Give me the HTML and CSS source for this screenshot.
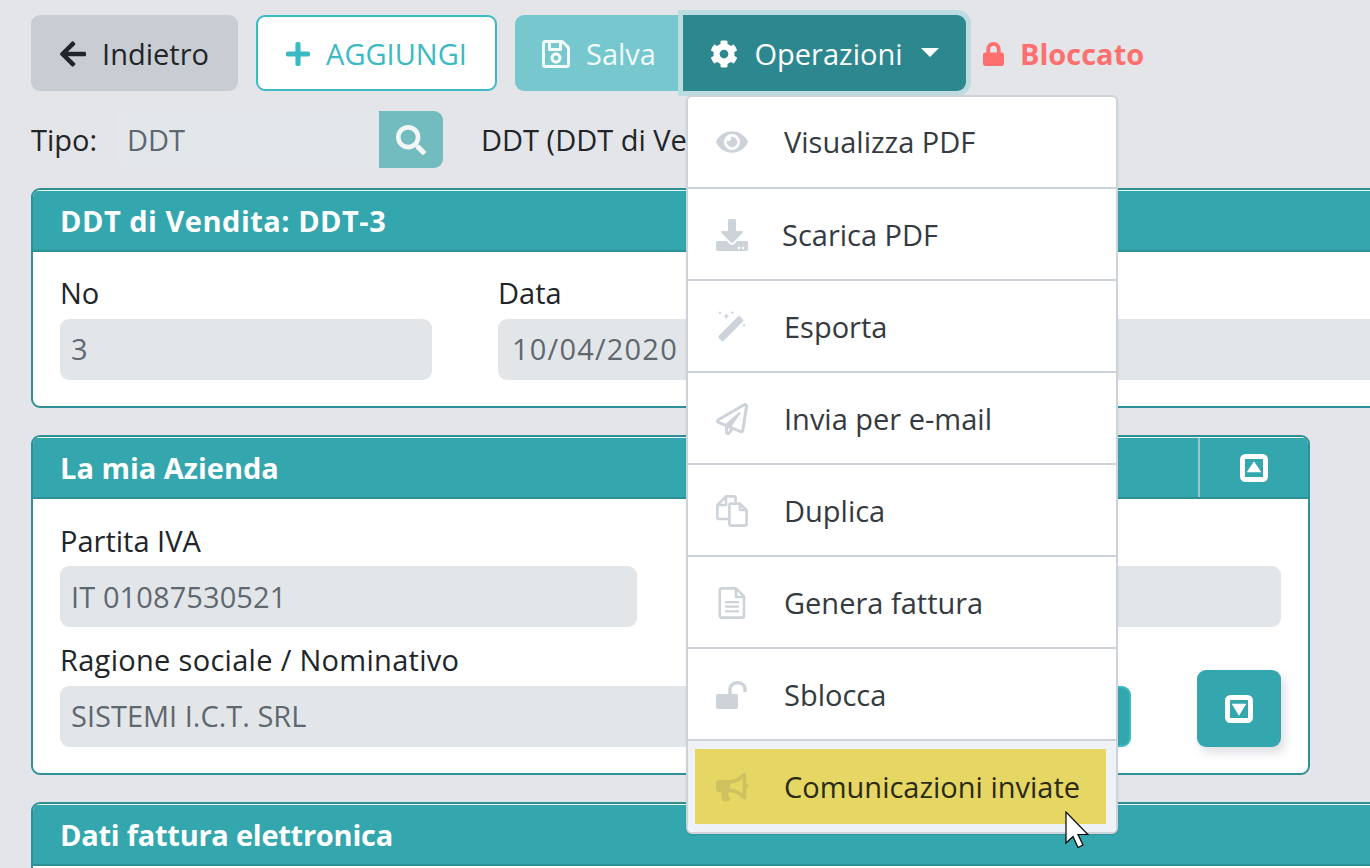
FILE: index.html
```html
<!DOCTYPE html>
<html lang="it">
<head>
<meta charset="utf-8">
<title>DDT di Vendita</title>
<link rel="stylesheet" href="styles.css">
</head>
<body>
<svg class="sprite" xmlns="http://www.w3.org/2000/svg">
<symbol id="i-back" viewBox="0 0 448 512"><path d="M257.5 445.1l-22.2 22.2c-9.4 9.4-24.6 9.4-33.9 0L7 273c-9.4-9.4-9.4-24.6 0-33.9L201.4 44.7c9.4-9.4 24.6-9.4 33.9 0l22.2 22.2c9.5 9.5 9.3 25-.4 34.3L136.6 216H424c13.3 0 24 10.7 24 24v32c0 13.3-10.7 24-24 24H136.6l120.5 114.8c9.8 9.3 10 24.8.4 34.3z"/></symbol>
<symbol id="i-plus" viewBox="0 0 448 512"><path d="M416 208H272V64c0-17.67-14.33-32-32-32h-32c-17.67 0-32 14.33-32 32v144H32c-17.67 0-32 14.33-32 32v32c0 17.67 14.33 32 32 32h144v144c0 17.67 14.33 32 32 32h32c17.67 0 32-14.33 32-32V304h144c17.67 0 32-14.33 32-32v-32c0-17.67-14.33-32-32-32z"/></symbol>
<symbol id="i-save" viewBox="0 0 448 512"><path d="M433.941 129.941l-83.882-83.882A48 48 0 0 0 316.118 32H48C21.49 32 0 53.49 0 80v352c0 26.51 21.49 48 48 48h352c26.51 0 48-21.49 48-48V163.882a48 48 0 0 0-14.059-33.941zM272 80v80H144V80h128zm122 352H54a6 6 0 0 1-6-6V86a6 6 0 0 1 6-6h42v104c0 13.255 10.745 24 24 24h176c13.255 0 24-10.745 24-24V83.882l78.243 78.243a6 6 0 0 1 1.757 4.243V426a6 6 0 0 1-6 6zM224 232c-48.523 0-88 39.477-88 88s39.477 88 88 88 88-39.477 88-88-39.477-88-88-88zm0 128c-22.056 0-40-17.944-40-40s17.944-40 40-40 40 17.944 40 40-17.944 40-40 40z"/></symbol>
<symbol id="i-cog" viewBox="0 0 512 512"><path d="M487.4 315.7l-42.6-24.6c4.3-23.2 4.3-47 0-70.2l42.6-24.6c4.9-2.8 7.1-8.6 5.5-14-11.1-35.6-30-67.8-54.7-94.6-3.8-4.1-10-5.1-14.8-2.3L380.8 110c-17.9-15.4-38.5-27.3-60.8-35.1V25.8c0-5.6-3.9-10.5-9.4-11.7-36.7-8.2-74.3-7.8-109.2 0-5.5 1.2-9.4 6.1-9.4 11.7V75c-22.2 7.9-42.8 19.8-60.8 35.1L88.7 85.5c-4.9-2.8-11-1.9-14.8 2.3-24.7 26.7-43.6 58.9-54.7 94.6-1.7 5.4.6 11.2 5.5 14L67.3 221c-4.3 23.2-4.3 47 0 70.2l-42.6 24.6c-4.9 2.8-7.1 8.6-5.5 14 11.1 35.6 30 67.8 54.7 94.6 3.8 4.1 10 5.1 14.8 2.3l42.6-24.6c17.9 15.4 38.5 27.3 60.8 35.1v49.2c0 5.6 3.9 10.5 9.4 11.7 36.7 8.2 74.3 7.8 109.2 0 5.5-1.2 9.4-6.1 9.4-11.7v-49.2c22.2-7.9 42.8-19.8 60.8-35.1l42.6 24.6c4.9 2.8 11 1.9 14.8-2.3 24.7-26.7 43.6-58.9 54.7-94.6 1.5-5.5-.7-11.3-5.6-14.1zM256 336c-44.1 0-80-35.9-80-80s35.9-80 80-80 80 35.9 80 80-35.9 80-80 80z"/></symbol>
<symbol id="i-lock" viewBox="0 0 448 512"><path d="M400 224h-24v-72C376 68.2 307.8 0 224 0S72 68.2 72 152v72H48c-26.5 0-48 21.5-48 48v192c0 26.5 21.5 48 48 48h352c26.5 0 48-21.5 48-48V272c0-26.5-21.5-48-48-48zm-104 0H152v-72c0-39.7 32.3-72 72-72s72 32.3 72 72v72z"/></symbol>
<symbol id="i-search" viewBox="0 0 512 512"><path d="M505 442.7L405.3 343c-4.5-4.5-10.6-7-17-7H372c27.6-35.3 44-79.7 44-128C416 93.1 322.9 0 208 0S0 93.1 0 208s93.1 208 208 208c48.3 0 92.7-16.4 128-44v16.3c0 6.4 2.5 12.5 7 17l99.7 99.7c9.4 9.4 24.6 9.4 33.9 0l28.3-28.3c9.4-9.4 9.4-24.6.1-34zM208 336c-70.7 0-128-57.2-128-128 0-70.7 57.2-128 128-128 70.7 0 128 57.2 128 128 0 70.7-57.2 128-128 128z"/></symbol>
<symbol id="i-eye" viewBox="0 0 576 512"><path d="M572.52 241.4C518.29 135.59 410.93 64 288 64S57.68 135.64 3.48 241.41a32.35 32.35 0 0 0 0 29.19C57.71 376.41 165.07 448 288 448s230.32-71.64 284.52-177.41a32.35 32.35 0 0 0 0-29.19zM288 400a144 144 0 1 1 144-144 143.93 143.93 0 0 1-144 144zm0-240a95.31 95.31 0 0 0-25.31 3.79 47.85 47.85 0 0 1-66.9 66.9A95.78 95.78 0 1 0 288 160z"/></symbol>
<symbol id="i-download" viewBox="0 0 512 512"><path d="M216 0h80c13.3 0 24 10.7 24 24v168h87.7c17.8 0 26.7 21.5 14.1 34.1L269.7 378.3c-7.5 7.5-19.8 7.5-27.3 0L90.1 226.1c-12.6-12.6-3.7-34.1 14.1-34.1H192V24c0-13.3 10.7-24 24-24zm296 376v112c0 13.3-10.7 24-24 24H24c-13.3 0-24-10.7-24-24V376c0-13.3 10.7-24 24-24h146.7l49 49c20.1 20.1 52.5 20.1 72.6 0l49-49H488c13.3 0 24 10.7 24 24zm-124 88c0-11-9-20-20-20s-20 9-20 20 9 20 20 20 20-9 20-20zm64 0c0-11-9-20-20-20s-20 9-20 20 9 20 20 20 20-9 20-20z"/></symbol>
<symbol id="i-magic" viewBox="0 0 30 30"><path d="M2.6 23.2 20.6 5.2a1.4 1.4 0 0 1 2 0l2.6 2.6a1.4 1.4 0 0 1 0 2L7.2 27.8a1.4 1.4 0 0 1-2 0L2.6 25.2a1.4 1.4 0 0 1 0-2z"/><path d="M9.7 1.5Q9.9 4.8 13 5 9.9 5.2 9.7 8.5 9.5 5.2 6.4 5 9.5 4.8 9.7 1.5zM3.7-.4Q3.8 1.6 5.8 1.7 3.8 1.8 3.7 3.8 3.6 1.8 1.6 1.7 3.6 1.6 3.7-.4zM15.3-.4Q15.4 1.6 17.4 1.7 15.4 1.8 15.3 3.8 15.2 1.8 13.2 1.7 15.2 1.6 15.3-.4zM26.3 11.2Q26.4 13.2 28.4 13.3 26.4 13.4 26.3 15.4 26.2 13.4 24.2 13.3 26.2 13.2 26.3 11.2z"/></symbol>
<symbol id="i-plane" viewBox="0 0 512 512"><path d="M440 6.5L24 246.4c-34.4 19.9-31.1 70.8 5.7 85.9L144 379.6V464c0 46.4 59.2 65.5 86.6 28.6l43.8-59.1 111.9 46.2c5.9 2.4 12.1 3.6 18.3 3.6 8.2 0 16.3-2.1 23.6-6.2 12.8-7.2 21.6-20 23.9-34.5l59.4-387.2c6.1-40.1-36.9-68.8-71.5-48.9zM192 464v-64.6l36.6 15.1L192 464zm212.6-28.7l-153.8-63.5L391 169.5c10.7-15.5-9.5-33.5-23.7-21.2L155.8 332.6 48 288 464 48l-59.4 387.3z"/></symbol>
<symbol id="i-copy" viewBox="0 0 32 32"><path fill="none" stroke="currentColor" stroke-width="2.6" stroke-linejoin="round" d="M12 24H3a1.6 1.6 0 0 1-1.6-1.6V10L10 1.4h8A1.6 1.6 0 0 1 19.6 3v5M2 10h8V2"/><path fill="none" stroke="currentColor" stroke-width="2.6" stroke-linejoin="round" d="M14.6 8.6H24l6.6 6.6V29a1.6 1.6 0 0 1-1.6 1.6H15a1.6 1.6 0 0 1-1.6-1.6V10a1.4 1.4 0 0 1 1.2-1.4zM24 9v6h6"/></symbol>
<symbol id="i-file" viewBox="0 0 28 32"><path fill="none" stroke="currentColor" stroke-width="2.6" stroke-linejoin="round" d="M3.4 1.4H18L26 9.4V29a1.6 1.6 0 0 1-1.6 1.6H3.4A1.6 1.6 0 0 1 1.8 29V3a1.6 1.6 0 0 1 1.6-1.6zM18 2v8h8"/><path d="M7 14h14v2.2H7zM7 18.6h14v2.2H7zM7 23.2h14v2.2H7z"/></symbol>
<symbol id="i-unlock" viewBox="0 0 32 28"><path d="M2 13h18a2 2 0 0 1 2 2v11a2 2 0 0 1-2 2H2a2 2 0 0 1-2-2V15a2 2 0 0 1 2-2z"/><path fill="none" stroke="currentColor" stroke-width="3.4" d="M14 13V8a7.5 6.3 0 0 1 15 0v3"/></symbol>
<symbol id="i-horn" viewBox="0 0 576 512"><path d="M576 240c0-23.63-12.95-44.04-32-55.12V32.01C544 23.26 537.02 0 512 0c-7.12 0-14.19 2.38-19.98 7.02l-85.03 68.03C364.28 109.19 310.66 128 256 128H64c-35.35 0-64 28.65-64 64v96c0 35.35 28.65 64 64 64h33.7c-1.39 10.48-2.18 21.14-2.18 32 0 39.77 9.26 77.35 25.56 110.94 5.19 10.69 16.52 17.06 28.4 17.06h74.28c26.05 0 41.69-29.84 25.9-50.56-16.4-21.52-26.15-48.36-26.15-77.44 0-11.11 1.62-21.79 4.41-32H256c54.66 0 108.28 18.81 150.98 52.95l85.03 68.03a32.023 32.023 0 0 0 19.98 7.02c24.92 0 32-22.78 32-32V295.13C563.05 284.04 576 263.63 576 240zm-96 141.42l-33.05-26.44C392.95 311.78 325.12 288 256 288v-96c69.12 0 136.95-23.78 190.95-66.98L480 98.58v282.84z"/></symbol>
<symbol id="i-sq-up" viewBox="0 0 28 28"><rect x="2.5" y="2.5" width="23" height="23" rx="3" fill="none" stroke="currentColor" stroke-width="5"/><path d="M14 7.3 21.3 18.3H6.7z"/></symbol>
<symbol id="i-sq-down" viewBox="0 0 28 28"><rect x="2.5" y="2.5" width="23" height="23" rx="3" fill="none" stroke="currentColor" stroke-width="5"/><path d="M6.7 8.7H21.3L14 20.7z"/></symbol>
</svg>

<div class="page">
  <div class="toolbar">
    <button class="btn btn-back"><svg class="ico ico-26"><use href="#i-back"/></svg>Indietro</button>
    <button class="btn btn-add"><svg class="ico ico-plus"><use href="#i-plus"/></svg>AGGIUNGI</button>
    <div class="btn-group">
      <button class="btn btn-save"><svg class="ico ico-28"><use href="#i-save"/></svg>Salva</button>
      <button class="btn btn-ops"><svg class="ico ico-28"><use href="#i-cog"/></svg>Operazioni<span class="caret"></span></button>
    </div>
    <div class="locked"><svg class="ico ico-24"><use href="#i-lock"/></svg>Bloccato</div>
  </div>

  <div class="type-row">
    <span class="type-label">Tipo:</span>
    <span class="type-input">DDT</span>
    <span class="type-search"><svg class="ico ico-search"><use href="#i-search"/></svg></span>
    <span class="type-desc">DDT (DDT di Vendita)</span>
  </div>

  <section class="card card-wide">
    <h2 class="card-head"><span class="card-title title-wide">DDT di Vendita: DDT-3</span></h2>
    <div class="card-body fields-doc">
      <div class="field"><label class="field-label">No</label><div class="input">3</div></div>
      <div class="field"><label class="field-label">Data</label><div class="input input-date">10/04/2020</div></div>
      <div class="field"><span class="field-label"></span><div class="input"></div></div>
    </div>
  </section>

  <section class="card card-company">
    <h2 class="card-head"><span class="card-title">La mia Azienda</span><span class="card-toggle"><svg class="ico ico-toggle"><use href="#i-sq-up"/></svg></span></h2>
    <div class="card-body">
      <div class="company-row">
        <div class="field field-vat"><label class="field-label">Partita IVA</label><div class="input">IT 01087530521</div></div>
        <div class="field field-fill"><span class="field-label"></span><div class="input"></div></div>
      </div>
      <div class="company-row company-row-2">
        <div class="field field-name"><label class="field-label label-wide">Ragione sociale / Nominativo</label><div class="input">SISTEMI I.C.T. SRL</div></div>
        <span class="lookup-btn"></span>
        <span class="expand-btn"><svg class="ico ico-toggle"><use href="#i-sq-down"/></svg></span>
      </div>
    </div>
  </section>

  <section class="card card-wide card-last">
    <h2 class="card-head"><span class="card-title title-tight">Dati fattura elettronica</span></h2>
    <div class="card-body"></div>
  </section>

  <ul class="menu">
    <li class="menu-item menu-item-first"><svg class="ico menu-ico"><use href="#i-eye"/></svg>Visualizza PDF</li>
    <li class="menu-item menu-item-dl"><svg class="ico menu-ico"><use href="#i-download"/></svg>Scarica PDF</li>
    <li class="menu-item"><svg class="ico menu-ico"><use href="#i-magic"/></svg>Esporta</li>
    <li class="menu-item"><svg class="ico menu-ico"><use href="#i-plane"/></svg>Invia per e-mail</li>
    <li class="menu-item"><svg class="ico menu-ico"><use href="#i-copy"/></svg>Duplica</li>
    <li class="menu-item"><svg class="ico menu-ico"><use href="#i-file"/></svg>Genera fattura</li>
    <li class="menu-item"><svg class="ico menu-ico"><use href="#i-unlock"/></svg>Sblocca</li>
    <li class="menu-item menu-item-active"><span class="highlight"><svg class="ico menu-ico"><use href="#i-horn"/></svg>Comunicazioni inviate</span></li>
  </ul>

  <svg class="cursor" viewBox="0 0 24 38" width="24" height="38"><path d="M1 1v31l7-6.5 5 11 5-2.5-5-10.5h10z" fill="#fff" stroke="#000" stroke-width="1.2" stroke-linejoin="miter"/></svg>
</div>
</body>
</html>
```

FILE: styles.css
```css
* { box-sizing: border-box; }
html, body { margin: 0; padding: 0; height: 100%; }
body { background: #e3e5e8; overflow: hidden; }
.sprite { display: none; }
.page {
  position: relative;
  width: 1370px;
  height: 868px;
  overflow: hidden;
  padding: 15px 0 0 31px;
  font-family: "Open Sans", "Noto Sans", sans-serif;
  font-stretch: 88%;
  font-size: 29px;
  line-height: 1.5;
  color: #212529;
}
.ico { fill: currentColor; flex: none; display: block; }
.ico-26 { width: 26px; height: 30px; }
.ico-plus { width: 24px; height: 28px; }
.ico-28 { width: 28px; height: 32px; }
.ico-24 { width: 21px; height: 24px; }

.toolbar { display: flex; align-items: stretch; height: 76px; }
.btn {
  display: flex;
  align-items: center;
  justify-content: center;
  font: inherit;
  font-stretch: inherit;
  border: 2px solid transparent;
  padding: 2px 0 0;
  height: 76px;
  gap: 16px;
}
.btn-back { width: 207px; background: #c8cdd4; border-radius: 9px; color: #212529; }
.btn-add { width: 241px; margin-left: 18px; background: #fff; border-color: #3cbac3; border-radius: 9px; color: #3cbac3; }
.btn-group { display: flex; margin-left: 18px; }
.btn-save { width: 168px; background: #76c8ce; border-radius: 9px 0 0 9px; color: #f2fafa; }
.btn-ops {
  width: 283px;
  background: #2c878f;
  border-radius: 0 9px 9px 0;
  color: #fff;
  box-shadow: 0 0 0 5px #bcdcdf;
  position: relative;
}
.caret { width: 0; height: 0; border: 9px solid transparent; border-top-color: #fff; border-bottom: 0; margin-left: 2px; margin-top: -4px; }
.locked { display: flex; align-items: center; gap: 16px; margin-left: 17px; padding-top: 2px; color: #fe6f6f; font-weight: 700; }

.type-row { display: flex; align-items: center; height: 57px; margin-top: 20px; }
.type-label { width: 84px; }
.type-input { width: 264px; height: 57px; display: flex; align-items: center; padding-left: 12px; background: #e4e7ea; border-radius: 9px 0 0 9px; color: #5f6770; }
.type-search { width: 64px; height: 57px; display: flex; align-items: center; justify-content: center; background: #72bcc0; border-radius: 0 9px 9px 0; color: #f3f6f6; }
.ico-search { width: 30px; height: 30px; }
.type-desc { margin-left: 38px; white-space: nowrap; }

.card { border: 2px solid #2e8f95; border-radius: 9px; background: #fff; margin-top: 20px; overflow: hidden; }
.card-wide { width: 1400px; }
.card-company { width: 1279px; margin-top: 27px; }
.card-last { margin-top: 27px; height: 120px; border-radius: 9px 9px 0 0; }
.card-head {
  margin: 0;
  height: 62px;
  background: #34a6ad;
  border-top: 1px solid #e9f5f6;
  border-bottom: 2px solid #2e8f95;
  color: #fff;
  font-size: 29px;
  font-weight: 700;
  display: flex;
  align-items: center;
  justify-content: space-between;
  padding-left: 27px;
}
.title-wide { letter-spacing: .5px; }
.title-tight { letter-spacing: -.25px; }
.card-toggle { width: 110px; height: 100%; display: flex; align-items: center; justify-content: center; border-left: 2px solid #9cc4c8; }
.ico-toggle { width: 28px; height: 28px; color: #fff; }
.card-body { padding: 20px 27px 26px; }
.fields-doc { display: grid; grid-template-columns: 372px 400px 1fr; column-gap: 66px; }
.field-label { display: block; line-height: 41px; height: 47px; }
.label-wide { letter-spacing: .3px; }
.input { height: 61px; padding-left: 11px; line-height: 60px; background: #e3e6e9; border-radius: 9px; color: #5f6770; }
.input-date { padding-left: 14px; letter-spacing: 1.2px; }
.company-row { display: flex; gap: 64px; }
.company-row-2 { margin-top: 12px; gap: 0; align-items: flex-end; }
.field-vat { width: 577px; }
.field-vat .field-label { line-height: 43px; }
.field-vat .input { line-height: 62px; letter-spacing: .1px; }
.field-fill { flex: none; width: 580px; }
.field-name { flex: none; width: 950px; }
.lookup-btn { flex: none; width: 121px; height: 61px; background: #34a6ad; border: 2px solid #3cbac3; border-radius: 0 9px 9px 0; }
.expand-btn { flex: none; width: 84px; height: 77px; margin-left: 66px; display: flex; align-items: center; justify-content: center; background: #34a6ad; border-radius: 9px; box-shadow: 4px 6px 10px rgba(90, 100, 120, .2); }

.menu {
  position: absolute;
  left: 686px;
  top: 95px;
  width: 432px;
  margin: 0;
  padding: 0;
  list-style: none;
  background: #fff;
  border: 2px solid #ced3da;
  border-radius: 6px;
  box-shadow: 0 1px 2px rgba(0, 0, 0, .1);
}
.menu-item {
  height: 92px;
  display: flex;
  align-items: center;
  padding: 2px 0 0 28px;
  border-bottom: 2px solid #ced3da;
  color: #343a40;
}
.menu-item-first { padding-top: 0; }
.menu-ico { width: 32px; height: 32px; color: #ced3da; margin-right: 36px; }
.menu-item-dl .menu-ico { margin-right: 34px; }
.menu-item-active { height: 91px; border-bottom: 0; padding: 7px 10px 7px 7px; background: #eef1f5; border-radius: 0 0 5px 5px; }
.highlight { display: flex; align-items: center; width: 100%; height: 75px; padding-left: 21px; background: #e6d663; color: #2a2b17; }
.highlight .menu-ico { color: #cfc15f; }
.cursor { position: absolute; left: 1065px; top: 811px; }
```
